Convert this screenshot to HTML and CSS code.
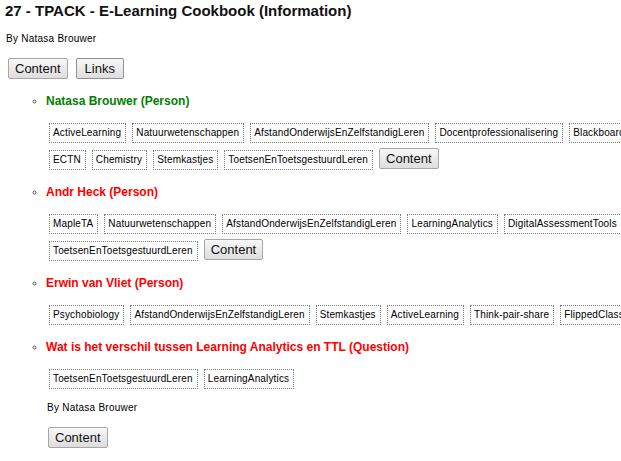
FILE: index.html
```html
<!DOCTYPE html>
<html>
<head>
<meta charset="utf-8">
<title>27 - TPACK - E-Learning Cookbook (Information)</title>
<link rel="stylesheet" href="styles.css">
</head>
<body>
<h1 class="title">27 - TPACK - E-Learning Cookbook (Information)</h1>
<p class="byline">By Natasa Brouwer</p>
<div class="toolbar">
  <button class="btn">Content</button>
  <button class="btn wide">Links</button>
</div>
<ul class="items">
  <li class="item">
    <div class="item-title green">Natasa Brouwer (Person)</div>
    <div class="tags">
      <span class="tag">ActiveLearning</span>
      <span class="tag">Natuurwetenschappen</span>
      <span class="tag">AfstandOnderwijsEnZelfstandigLeren</span>
      <span class="tag">Docentprofessionalisering</span>
      <span class="tag">Blackboard</span>
      <span class="tag">ECTN</span>
      <span class="tag">Chemistry</span>
      <span class="tag">Stemkastjes</span>
      <span class="tag">ToetsenEnToetsgestuurdLeren</span>
      <button class="btn">Content</button>
    </div>
  </li>
  <li class="item">
    <div class="item-title red">Andr Heck (Person)</div>
    <div class="tags">
      <span class="tag">MapleTA</span>
      <span class="tag">Natuurwetenschappen</span>
      <span class="tag">AfstandOnderwijsEnZelfstandigLeren</span>
      <span class="tag">LearningAnalytics</span>
      <span class="tag">DigitalAssessmentTools</span>
      <span class="tag">ToetsenEnToetsgestuurdLeren</span>
      <button class="btn">Content</button>
    </div>
  </li>
  <li class="item">
    <div class="item-title red">Erwin van Vliet (Person)</div>
    <div class="tags">
      <span class="tag">Psychobiology</span>
      <span class="tag">AfstandOnderwijsEnZelfstandigLeren</span>
      <span class="tag">Stemkastjes</span>
      <span class="tag">ActiveLearning</span>
      <span class="tag">Think-pair-share</span>
      <span class="tag">FlippedClassroom</span>
    </div>
  </li>
  <li class="item">
    <div class="item-title red">Wat is het verschil tussen Learning Analytics en TTL (Question)</div>
    <div class="tags">
      <span class="tag">ToetsenEnToetsgestuurdLeren</span>
      <span class="tag">LearningAnalytics</span>
    </div>
    <p class="byline sub">By Natasa Brouwer</p>
    <div class="toolbar sub">
      <button class="btn">Content</button>
    </div>
  </li>
</ul>
</body>
</html>
```

FILE: styles.css
```css
html, body {
  overflow: hidden;
}
body {
  margin: 0;
  padding: 2px 5px 0 5px;
  font-family: "Liberation Sans", Arial, sans-serif;
  color: #000;
  background: #fff;
  width: 700px;
}
.title {
  margin: 0;
  font-size: 15px;
  line-height: 18px;
  font-weight: bold;
  color: #111;
}
.byline {
  margin: 13px 0 0 1px;
  font-size: 10px;
  line-height: 12px;
  letter-spacing: 0.25px;
}
.toolbar {
  display: flex;
  gap: 8px;
  margin: 13px 0 0 3px;
}
.btn {
  font-family: "Liberation Sans", Arial, sans-serif;
  font-size: 13px;
  line-height: 15px;
  padding: 2px 6px;
  margin: 0;
  color: #111;
  border: 1px solid #a6a6a6;
  border-radius: 2px;
  background: linear-gradient(#f8f8f8, #dddddd);
}
.btn.wide {
  padding: 2px 8px;
  border-color: #909090;
}
.items {
  margin: 15px 0 0 0;
  padding-left: 41px;
  list-style: circle;
}
.item {
  margin-bottom: 15px;
}
.item::marker {
  font-size: 10px;
  color: #555;
}
.item-title {
  font-size: 12px;
  line-height: 14px;
  font-weight: bold;
}
.green { color: #008000; }
.red { color: #ff0000; }
.tags {
  display: flex;
  flex-wrap: wrap;
  align-items: baseline;
  gap: 5px 6px;
  width: 608px;
  margin: 15px 0 0 3px;
}
.tag {
  font-size: 10px;
  line-height: 12px;
  letter-spacing: 0.15px;
  padding: 3px 4px 3px 3px;
  border: 1px dotted #7a7a7a;
  white-space: nowrap;
}
.byline.sub {
  margin: 13px 0 0 1px;
}
.toolbar.sub {
  margin: 13px 0 0 2px;
}
```
